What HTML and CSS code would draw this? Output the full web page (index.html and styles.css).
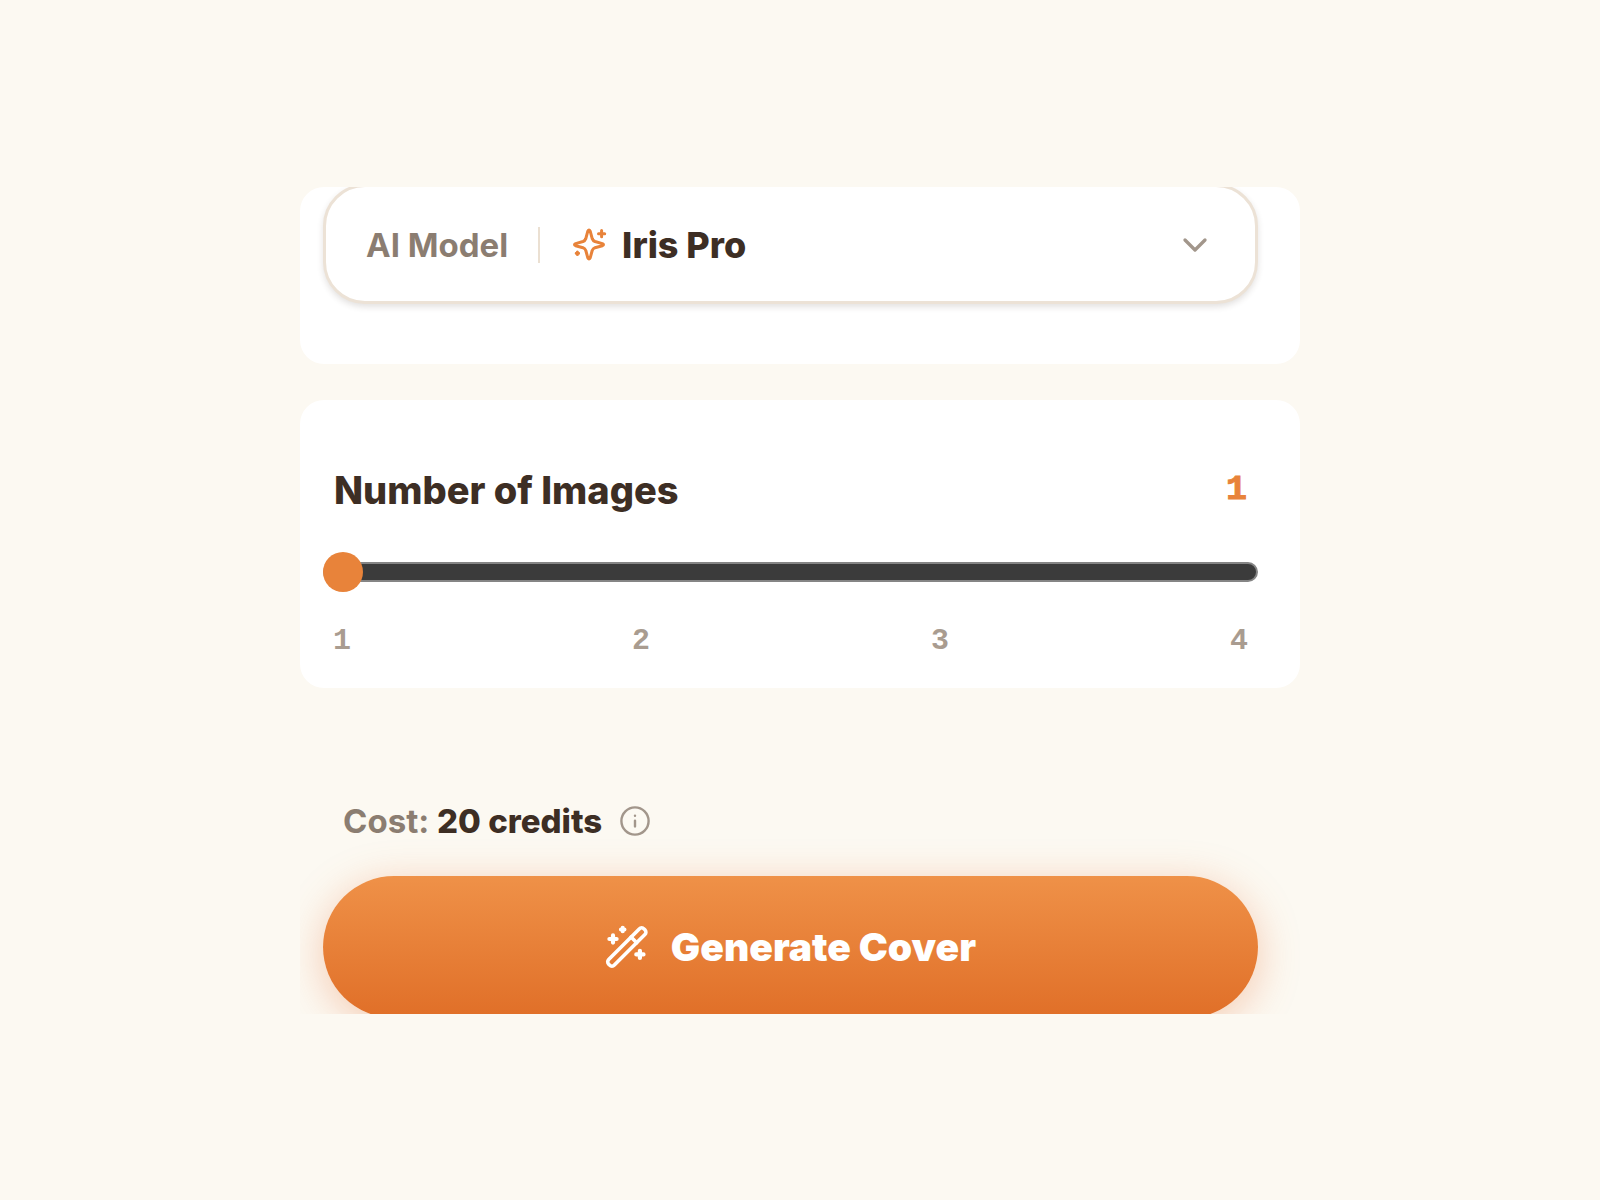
FILE: index.html
```html
<!DOCTYPE html>
<html lang="en">
<head>
  <meta charset="UTF-8" />
  <meta name="viewport" content="width=device-width, initial-scale=1" />
  <title>Generate Cover</title>
  <link rel="stylesheet" href="styles.css">
</head>
<body>
  <form class="container" id="cover-form">
    <!-- Model picker -->
    <section class="panel model-panel">
      <div class="model-box">
        <label class="model-label" for="model">AI Model</label>
        <span class="divider"></span>
        <svg class="sparkle-icon" viewBox="0 0 36 36" aria-hidden="true">
          <path d="M15.8 4.2Q17 1.8 18.2 4.2L20.2 11.6Q21 13.7 23 14.5L30.4 16.6Q32.6 17.6 30.4 18.7L23 20.7Q21 21.4 20.2 23.5L18.2 30.9Q17 33.3 15.8 30.9L13.8 23.5Q13 21.4 11 20.7L3.6 18.7Q1.4 17.6 3.6 16.6L11 14.5Q13 13.7 13.8 11.6Z" />
          <path d="M29.6 3.6V9.8M26.5 6.7H32.7" />
          <path d="M5.4 25V27.4M4.2 26.2H6.6" />
        </svg>
        <select class="model-select" id="model">
          <option selected>Iris Pro</option>
        </select>
        <svg class="chevron-icon" viewBox="0 0 24 24" aria-hidden="true">
          <path d="M6 9l6 6 6-6" />
        </svg>
      </div>
    </section>

    <!-- Image count -->
    <section class="panel count-panel">
      <div class="count-head">
        <label class="count-title" for="count">Number of Images</label>
        <output class="count-value" id="count-value" for="count">1</output>
      </div>
      <input type="range" id="count" class="slider" min="1" max="4" step="1" value="1" />
      <div class="ticks">
        <span>1</span>
        <span>2</span>
        <span>3</span>
        <span>4</span>
      </div>
    </section>

    <!-- Cost and submit -->
    <section class="panel submit-panel">
      <div class="cost">
        <span class="cost-text">Cost: <strong id="cost-value">20 credits</strong></span>
        <button type="button" class="info-btn" aria-label="About credits">
          <svg viewBox="0 0 30 30" aria-hidden="true">
            <circle cx="15" cy="15" r="13.6" />
            <path d="M15 14.6V20.4M15 9.6V9.8" />
          </svg>
        </button>
      </div>
      <button type="submit" class="generate-btn">
        <svg class="wand-icon" viewBox="0 0 44 46" aria-hidden="true">
          <g transform="translate(21.8 23) rotate(-45)">
            <rect x="-25" y="-4" width="50" height="8" rx="3.4" />
            <path d="M10 -4V4" />
          </g>
          <g class="wand-stars">
            <path d="M8 11.4V18.6M4.4 15H11.6" />
            <path d="M34.9 26.8V34M31.3 30.4H38.5" />
            <path d="M17.7 3.8V7.2M16 5.5H19.4" />
          </g>
        </svg>
        Generate Cover
      </button>
    </section>
  </form>

  <script>
    const count = document.getElementById('count');
    const countValue = document.getElementById('count-value');
    const costValue = document.getElementById('cost-value');

    count.addEventListener('input', () => {
      countValue.textContent = count.value;
      costValue.textContent = `${count.value * 20} credits`;
    });

    document.getElementById('cover-form').addEventListener('submit', (e) => {
      e.preventDefault();
    });
  </script>
</body>
</html>
```

FILE: styles.css
```css
* {
  box-sizing: border-box;
}

body {
  margin: 0;
  min-height: 100vh;
  display: flex;
  justify-content: center;
  align-items: center;
  background-color: #fcf9f2;
  font-family: Inter, "Liberation Sans", sans-serif;
  color: #3d2e24;
}

.container {
  width: 100%;
  max-width: 1000px;
  display: flex;
  flex-direction: column;
  gap: 36px;
}

.panel {
  background-color: #fff;
  border-radius: 24px;
  padding: 0 42px 0 23px;
  overflow: hidden;
}

svg {
  fill: none;
  stroke: currentColor;
  stroke-linecap: round;
  stroke-linejoin: round;
  flex-shrink: 0;
}

/* Model picker */
.model-panel {
  padding-bottom: 60px;
}

.model-box {
  display: flex;
  align-items: center;
  margin-top: -3px;
  padding: 38px 40px 36px;
  border: 3px solid #ece2d6;
  border-radius: 42px;
  background-color: #fff;
  box-shadow: 0 3px 6px rgba(60, 45, 35, 0.14);
}

.model-label {
  font-size: 33px;
  line-height: 40px;
  font-weight: 700;
  color: #8b7d71;
}

.divider {
  width: 2px;
  height: 36px;
  margin: 0 32px 0 30px;
  background-color: #ebe0d2;
}

.sparkle-icon {
  width: 36px;
  height: 36px;
  color: #e8833a;
  stroke-width: 3;
}

.model-select {
  flex: 1;
  min-width: 0;
  padding: 0 0 0 14px;
  border: none;
  appearance: none;
  background: none;
  font-family: inherit;
  font-size: 36px;
  line-height: 40px;
  font-weight: 800;
  color: inherit;
  cursor: pointer;
}

.chevron-icon {
  width: 40px;
  height: 40px;
  color: #a2968b;
  stroke-width: 2;
}

/* Image count */
.count-panel {
  padding-top: 66px;
  padding-bottom: 27px;
}

.count-head {
  display: flex;
  justify-content: space-between;
  align-items: center;
  padding: 0 11px;
}

.count-title {
  font-size: 38px;
  line-height: 48px;
  font-weight: 800;
}

.count-value {
  font-family: "Liberation Mono", monospace;
  font-size: 35px;
  line-height: 48px;
  font-weight: 700;
  color: #e8833a;
  -webkit-text-stroke: 1px #e8833a;
}

.slider {
  display: block;
  width: 100%;
  height: 40px;
  margin: 38px 0 29px;
  appearance: none;
  background: none;
  cursor: pointer;
}
.slider::-webkit-slider-runnable-track {
  height: 20px;
  border: 2px solid #858585;
  border-radius: 10px;
  background-color: #3b3b3b;
}
.slider::-webkit-slider-thumb {
  appearance: none;
  width: 40px;
  height: 40px;
  margin: -12px 0 0 -2px;
  border: none;
  border-radius: 50%;
  background-color: #e8833a;
}

.ticks {
  display: flex;
  justify-content: space-between;
  padding: 0 10px;
  font-family: "Liberation Mono", monospace;
  font-size: 30px;
  line-height: 40px;
  font-weight: 700;
  color: #a99c90;
}

/* Cost and submit */
.submit-panel {
  height: 290px;
  padding-top: 76px;
  border-radius: 0;
  background: none;
}

.cost {
  display: flex;
  align-items: center;
  gap: 18px;
  padding: 0 20px;
  margin-bottom: 34px;
}

.cost-text {
  font-size: 33px;
  line-height: 42px;
  font-weight: 700;
  color: #8b7d71;
}
.cost-text strong {
  font-weight: 800;
  color: #3d2e24;
}

.info-btn {
  display: flex;
  padding: 0;
  border: none;
  background: none;
  color: #a2968b;
  cursor: pointer;
}
.info-btn svg {
  width: 30px;
  height: 30px;
  stroke-width: 2.4;
}

.generate-btn {
  width: 100%;
  display: flex;
  justify-content: center;
  align-items: center;
  gap: 22px;
  padding: 47px 20px;
  border: none;
  border-radius: 71px;
  background: linear-gradient(#ef9148, #e06f28);
  box-shadow: 0 8px 40px rgba(232, 120, 60, 0.36);
  font-family: inherit;
  font-size: 39px;
  line-height: 48px;
  font-weight: 900;
  color: #fff;
  cursor: pointer;
}
.generate-btn:hover {
  filter: brightness(0.95);
}

.wand-icon {
  width: 44px;
  height: 46px;
  stroke-width: 3.6;
}
.wand-stars {
  stroke-width: 4.2;
}
```
